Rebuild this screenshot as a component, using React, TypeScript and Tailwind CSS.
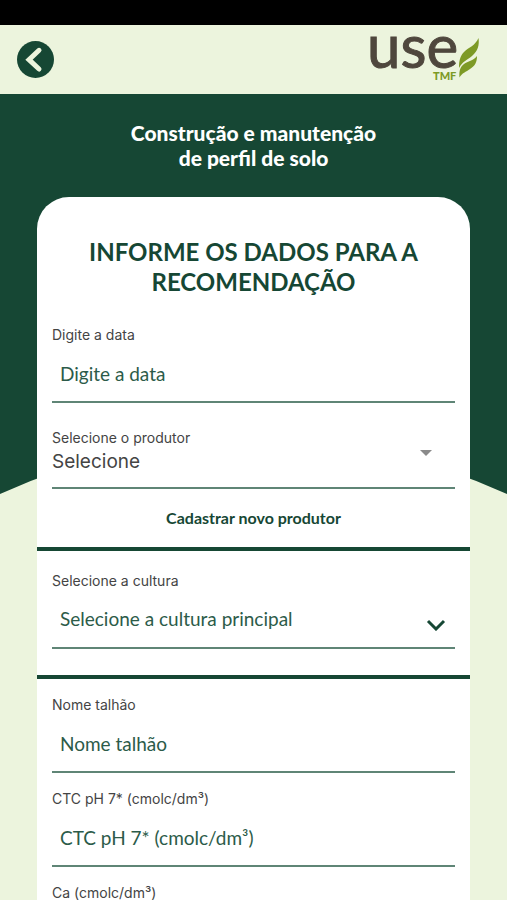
import React from "react";

interface FieldProps {
  id: string;
  label: string;
}

const labelClass =
  "block font-[Inter,sans-serif] text-sm leading-5 text-[#444444]";
const controlClass =
  "block w-full appearance-none rounded-none border-b-2 border-[#5f8576] bg-transparent outline-none";

const TextField: React.FC<FieldProps> = ({ id, label }) => {
  return (
    <div>
      <label htmlFor={id} className={labelClass}>
        {label}
      </label>
      <input
        id={id}
        type="text"
        placeholder={label}
        className={`${controlClass} h-[58px] pl-2 text-[19px] text-[#164734] placeholder:text-[#2c5b49]`}
      />
    </div>
  );
};

const Logo = () => (
  <svg
    viewBox="0 0 112 69"
    className="h-[69px] w-28 overflow-visible"
    role="img"
    aria-label="USE TMF"
  >
    <text
      x="-2"
      y="43"
      fontSize="60"
      fontFamily="Lato, sans-serif"
      fill="#4f473d"
      stroke="#4f473d"
      strokeWidth="1"
    >
      use
    </text>
    <text
      x="64"
      y="55"
      fontSize="11"
      fontWeight="900"
      fontFamily="Lato, sans-serif"
      fill="#7d9a26"
    >
      TMF
    </text>
    <path
      d="M109.500 13C106 21 100 22 95 27C91 31 90 36 90 43C93 37 98 35 103 31C109 26 110.500 20 109.500 13Z"
      fill="#7d9a26"
    />
    <path
      d="M108 31C104 36 99 36 95 39C91 42 90 46 90.500 52.500C93 48 97 47 101 44C106 41 108 37 108 31Z"
      fill="#7d9a26"
    />
  </svg>
);

const Header = () => (
  <header className="flex h-[69px] shrink-0 items-center justify-between bg-[#ecf4dd] pr-[26px] pl-[17px]">
    <button type="button" aria-label="Voltar" className="rounded-full">
      <svg viewBox="0 0 37 37" className="size-[37px]">
        <circle cx="18.500" cy="18.500" r="18.500" fill="#164734" />
        <path
          d="M22 9.300 12 18.700l10 9.300"
          fill="none"
          stroke="#ecf4dd"
          strokeWidth="5"
          strokeLinecap="round"
        />
      </svg>
    </button>
    <Logo />
  </header>
);

export default function App() {
  return (
    <div className="flex h-screen flex-col bg-[#ecf4dd] font-[Lato,sans-serif] text-[#164734]">
      <div className="h-[25px] shrink-0 bg-black" />
      <Header />
      <main className="relative isolate flex-1 overflow-y-auto [scrollbar-width:none]">
        {/* curved backdrop behind the card */}
        <svg
          viewBox="0 0 507 400"
          preserveAspectRatio="none"
          className="absolute inset-x-0 top-0 -z-10 h-[400px] w-full"
          aria-hidden="true"
        >
          <path d="M0 0H507V400Q253 286 0 400Z" fill="#164734" />
        </svg>

        <h1 className="pt-[26px] text-center text-[21px] leading-[25px] font-black text-white">
          Construção e manutenção
          <br />
          de perfil de solo
        </h1>

        <form className="mx-[37px] mt-[27px] rounded-t-[32px] bg-white pt-10 pb-8">
          <h2 className="px-8 text-center text-2xl leading-[30px] font-bold">
            INFORME OS DADOS PARA A RECOMENDAÇÃO
          </h2>

          <div className="px-[15px] pt-7">
            <TextField id="data" label="Digite a data" />
            <div className="relative mt-[25px]">
              <label htmlFor="produtor" className={labelClass}>
                Selecione o produtor
              </label>
              <select
                id="produtor"
                className={`${controlClass} h-[41px] pb-3 font-[Inter,sans-serif] text-[19px] leading-6 text-[#444444]`}
              >
                <option>Selecione</option>
              </select>
              <svg
                viewBox="0 0 12 6"
                className="pointer-events-none absolute top-[22px] right-[23px] h-1.5 w-3"
                aria-hidden="true"
              >
                <path d="M0 0h12L6 6z" fill="#8a8a8a" />
              </svg>
            </div>
          </div>

          <div className="flex h-[62px] items-center justify-center border-b-4 border-[#164734]">
            <a href="#produtor" className="text-base font-bold">
              Cadastrar novo produtor
            </a>
          </div>

          <div className="border-b-4 border-[#164734] px-[15px] pt-5 pb-[26px]">
            <div className="relative">
              <label htmlFor="cultura" className={labelClass}>
                Selecione a cultura
              </label>
              <select
                id="cultura"
                className={`${controlClass} h-[58px] pl-2 text-[19px] text-[#2c5b49]`}
              >
                <option>Selecione a cultura principal</option>
              </select>
              <svg
                viewBox="0 0 20 12"
                className="pointer-events-none absolute right-[9px] bottom-[18px] h-3 w-5"
                aria-hidden="true"
              >
                <path
                  d="M2 2l8 8 8-8"
                  fill="none"
                  stroke="#164734"
                  strokeWidth="3"
                />
              </svg>
            </div>
          </div>

          <div className="flex flex-col gap-4 px-[15px] pt-4">
            <TextField id="talhao" label="Nome talhão" />
            <TextField id="ctc" label="CTC pH 7* (cmolc/dm³)" />
            <TextField id="ca" label="Ca (cmolc/dm³)" />
          </div>
        </form>
      </main>
    </div>
  );
}
